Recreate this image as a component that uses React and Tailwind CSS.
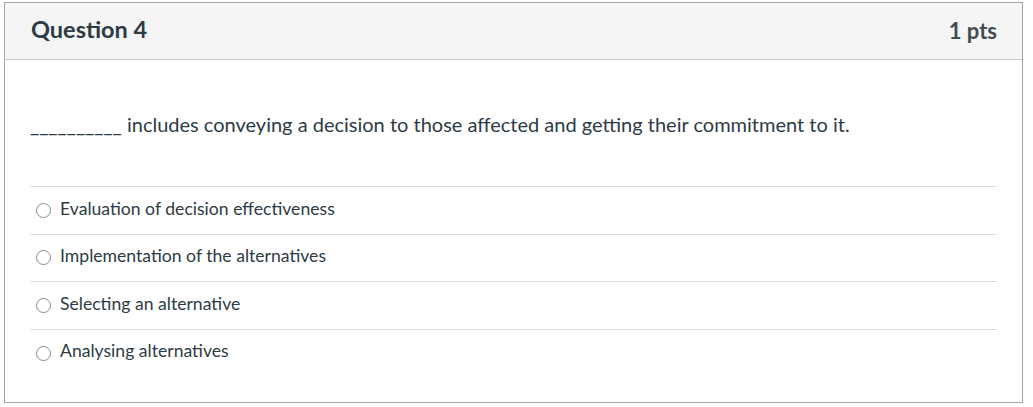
const answers = [
  'Evaluation of decision effectiveness',
  'Implementation of the alternatives',
  'Selecting an alternative',
  'Analysing alternatives',
];

const Radio = () => (
  <span className="inline-block w-[15px] h-[15px] rounded-full border border-[#8a8a8a] bg-white shrink-0 mt-[3px]" />
);

export default function App() {
  return (
    <div className="w-[1033px] h-[407px] bg-white pt-[2px] pl-[4px]" style={{ fontFamily: 'Lato, "Noto Sans", sans-serif' }}>
      <div className="w-[1019px] h-[401px] border border-[#a5a5a5] flex flex-col">
        {/* Header */}
        <div className="h-[57px] bg-[#f5f5f5] border-b border-[#c7cdd1] flex items-center justify-between pl-[26px] pr-[25px]">
          <h2 className="text-[23.5px] font-bold text-[#2d3b45] -mt-[2px]">Question 4</h2>
          <span className="text-[22px] font-bold text-[#2d3b45] opacity-90 -mt-[2px]">1 pts</span>
        </div>

        {/* Body */}
        <div className="px-[25px]">
          <p className="pt-[51px] pb-[48px] text-[20px] leading-[27px] text-[#2d3b45]">
            __________ includes conveying a decision to those affected and getting their commitment to it.
          </p>

          <div>
            {answers.map((a) => (
              <div key={a} className="h-[47.6px] border-t border-[#dcdedf] flex items-center gap-[9px] pl-[6px] pb-[3px]">
                <Radio />
                <span className="text-[17.6px] text-[#2d3b45]">{a}</span>
              </div>
            ))}
          </div>
        </div>
      </div>
    </div>
  );
}
